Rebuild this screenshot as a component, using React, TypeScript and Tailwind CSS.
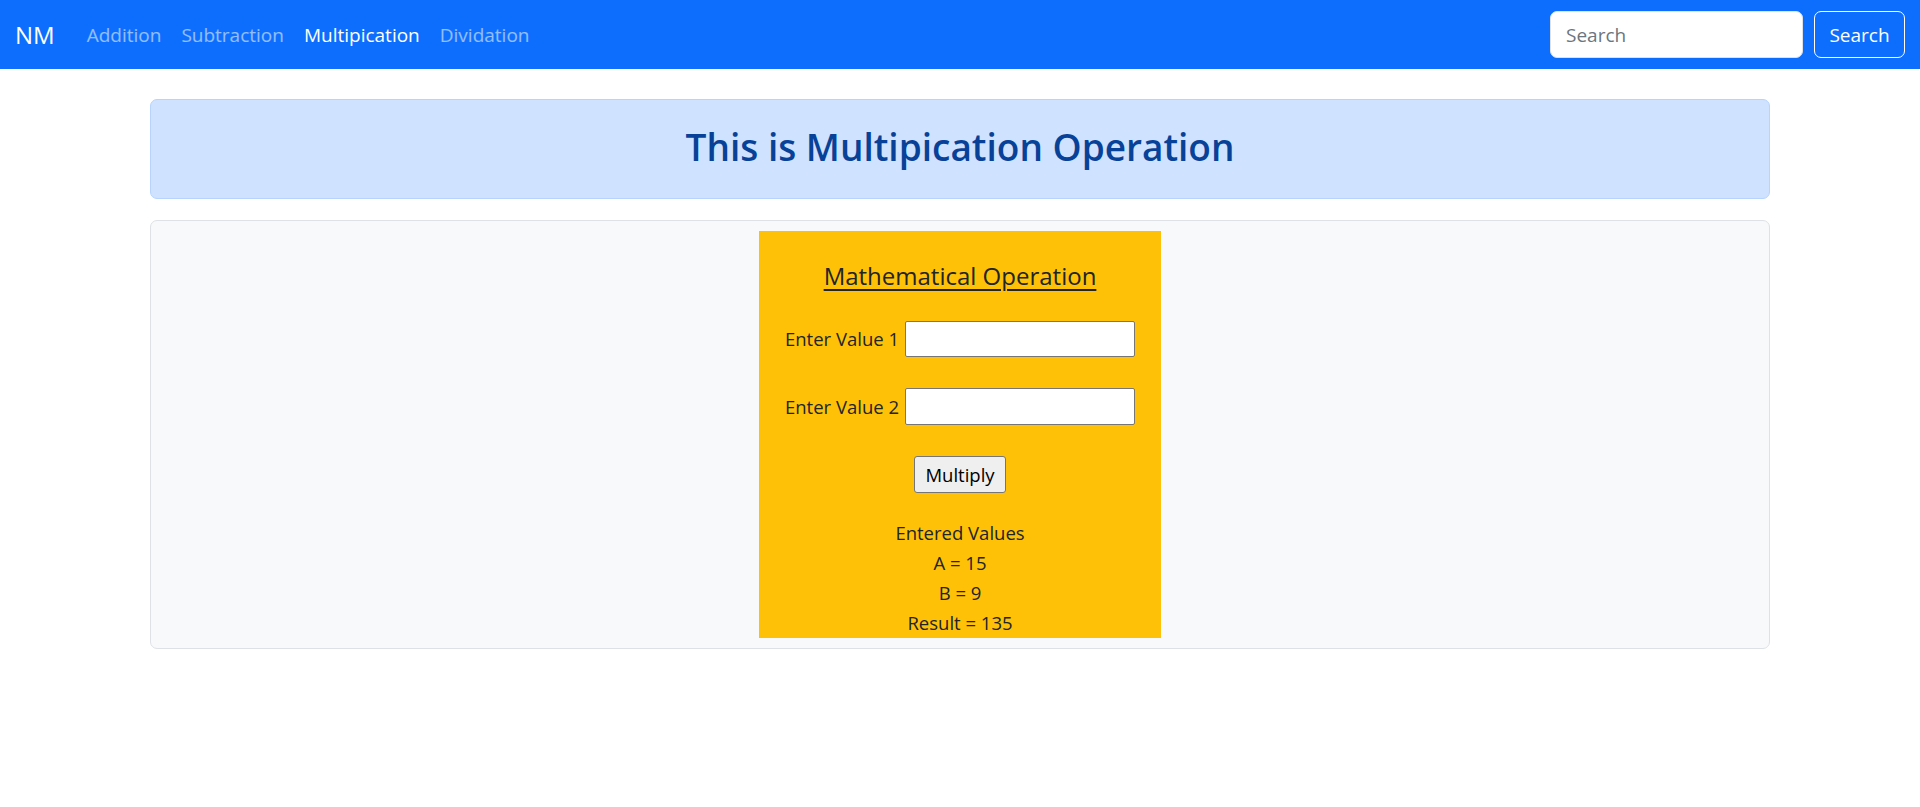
import React from "react";

const links = [
  { label: "Addition", active: false },
  { label: "Subtraction", active: false },
  { label: "Multipication", active: true },
  { label: "Dividation", active: false },
];

function Navbar() {
  return (
    <nav className="h-[69px] bg-[#0d6efd] flex items-center px-[15px]">
      <a className="text-[24px] leading-[38px] text-white mr-[22px]">NM</a>
      <ul className="flex items-center">
        {links.map((link) => (
          <li key={link.label}>
            <a
              className={`px-[10px] text-[19px] leading-[30px] ${
                link.active ? "text-white" : "text-white/55"
              }`}
            >
              {link.label}
            </a>
          </li>
        ))}
      </ul>
      <form className="ml-auto flex items-center gap-[11px]">
        <input
          type="search"
          placeholder="Search"
          className="w-[253px] h-[47px] rounded-[7px] bg-white border border-[#dee2e6] px-[15px] text-[19px] text-[#212529] placeholder:text-[#6c757d] outline-none"
        />
        <button
          type="button"
          className="w-[91px] h-[47px] rounded-[7px] border border-white text-white text-[19px]"
        >
          Search
        </button>
      </form>
    </nav>
  );
}

function Calculator() {
  return (
    <div className="w-[402px] mx-auto bg-[#ffc107] flex flex-col items-center pt-[30px]">
      <h5 className="text-[24px] leading-[30px] font-medium underline underline-offset-[4px] decoration-[2px]">
        Mathematical Operation
      </h5>
      <div className="mt-[30px] flex items-center gap-[6px]">
        <label>Enter Value 1</label>
        <input type="text" className="w-[230px] h-[36px] bg-white border border-[#767676] rounded-[2px]" />
      </div>
      <div className="mt-[31px] flex items-center gap-[6px]">
        <label>Enter Value 2</label>
        <input type="text" className="w-[230px] h-[37px] bg-white border border-[#767676] rounded-[2px]" />
      </div>
      <button
        type="button"
        className="mt-[31px] w-[92px] h-[37px] bg-[#efefef] border border-[#767676] rounded-[3px] text-black"
      >
        Multiply
      </button>
      <div className="mt-[25px] text-center leading-[30px]">
        <p>Entered Values</p>
        <p>A = 15</p>
        <p>B = 9</p>
        <p>Result = 135</p>
      </div>
    </div>
  );
}

export default function App() {
  return (
    <div className="min-h-screen bg-white text-[18.5px] leading-[30px] text-[#212529] font-['Segoe_UI','Open_Sans',sans-serif]">
      <Navbar />
      <main className="w-[1620px] mx-auto pt-[30px]">
        <div className="h-[100px] flex items-center justify-center rounded-[7px] border border-[#b6d4fe] bg-[#cfe2ff] pb-[4px]">
          <h2 className="text-[37px] leading-[48px] font-semibold text-[#084298]">
            This is Multipication Operation
          </h2>
        </div>
        <div className="mt-[21px] p-[10px] rounded-[7px] border border-[#dee2e6] bg-[#f8f9fa]">
          <Calculator />
        </div>
      </main>
    </div>
  );
}
